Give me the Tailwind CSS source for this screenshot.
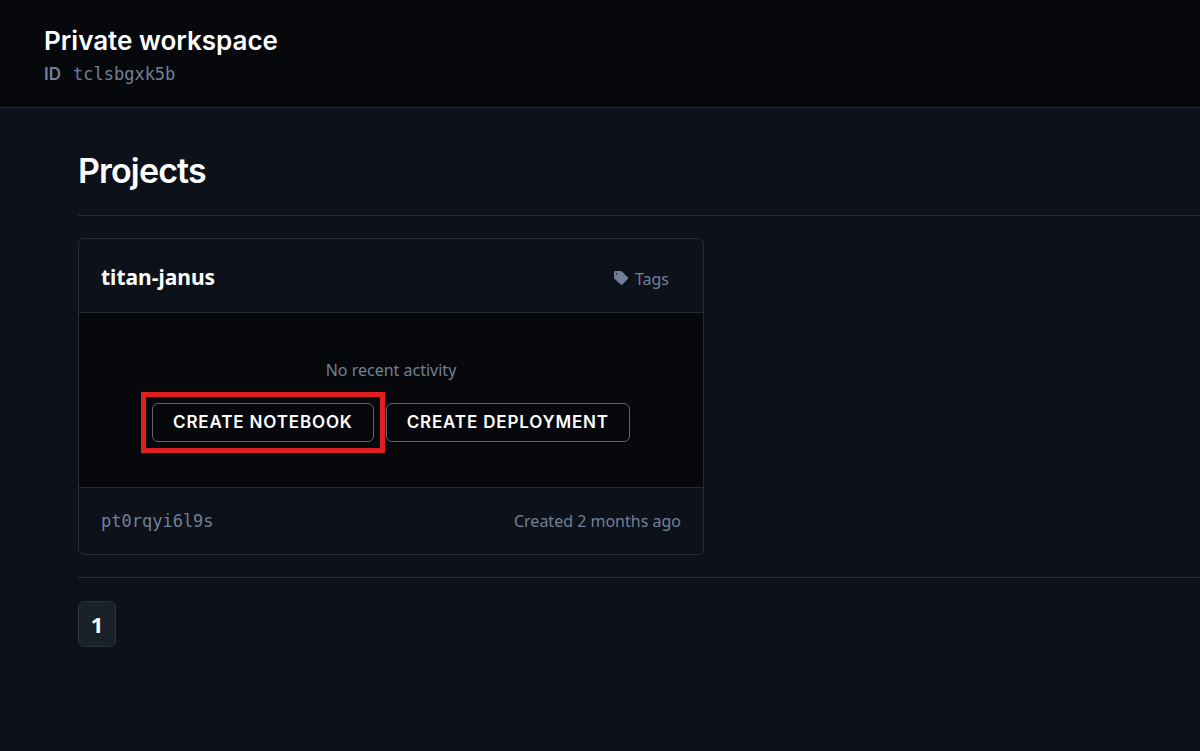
<!DOCTYPE html>
<html lang="en">
<head>
<meta charset="utf-8">
<meta name="viewport" content="width=device-width, initial-scale=1">
<title>Private workspace</title>
<script src="https://cdn.jsdelivr.net/npm/@tailwindcss/browser@4"></script>
</head>
<body class="min-h-screen bg-[#0d1119] font-['Noto_Sans',sans-serif] text-[#718096]">
  <header class="border-b border-[#272b33] bg-[#06080c] px-11 pt-[25px] pb-5">
    <h1 class="font-['Inter',sans-serif] text-[26px] leading-8 font-semibold text-white">Private workspace</h1>
    <p class="mt-1 flex items-center gap-3 text-[17px] leading-[26px]">
      <span class="font-['Inter',sans-serif] font-semibold">ID</span>
      <span class="font-['DejaVu_Sans_Mono',monospace]">tclsbgxk5b</span>
    </p>
  </header>
  <main class="pt-[39px] pl-[78px]">
    <h2 class="border-b border-[#272b33] pb-[21px] font-['Inter',sans-serif] text-[34px] leading-[47px] font-semibold tracking-tight text-white">Projects</h2>
    <article class="mt-[22px] w-[626px] max-w-full rounded-md border border-[#272b33]">
      <div class="flex h-[73px] items-center justify-between pt-[2px] pr-[34px] pl-[22px]">
        <h3 class="text-[21px] leading-8 font-bold text-white">titan-janus</h3>
        <button type="button" class="flex items-center gap-[7px] pt-1 text-[16px] leading-6">
          <svg class="mb-[2px] size-[14px]" viewBox="0 0 14 14" fill="currentColor" aria-hidden="true"><path fill-rule="evenodd" d="M1.500 0h5.200c.5 0 .9.2 1.200.5l5.600 5.600c.7.7.7 1.500 0 2.200l-4.900 5c-.7.7-1.500.7-2.200 0L.5 7.700C.2 7.400 0 7 0 6.500V1.500C0 .6.6 0 1.500 0Zm1.200 1.900a.8.8 0 1 0 0 1.600.8.8 0 0 0 0-1.600Z"/></svg>
          Tags
        </button>
      </div>
      <div class="border-y border-[#272b33] bg-[#06080c] pt-11 pb-[45px] text-center">
        <p class="text-[16px] leading-[27px]">No recent activity</p>
        <div class="mt-[19px] flex justify-center gap-3 font-['Inter',sans-serif] text-[17px] leading-[21px] font-semibold tracking-wider text-white">
          <div class="relative">
            <button type="button" class="rounded-md border border-[#5d6679] px-5 py-2">CREATE NOTEBOOK</button>
            <span class="pointer-events-none absolute -inset-[11px] border-5 border-[#e02020]"></span>
          </div>
          <button type="button" class="rounded-md border border-[#5d6679] px-5 py-2">CREATE DEPLOYMENT</button>
        </div>
      </div>
      <div class="flex h-[66px] items-center justify-between px-[22px] text-[16px] leading-6">
        <span class="font-['DejaVu_Sans_Mono',monospace] text-[17px]">pt0rqyi6l9s</span>
        <span>Created 2 months ago</span>
      </div>
    </article>
    <nav aria-label="Pages" class="mt-[22px] border-t border-[#272b33] pt-[23px]">
      <button type="button" aria-current="page" class="h-[46px] w-[38px] rounded-md border border-[#2b323a] bg-[#19212a] text-[22px] font-bold text-white">1</button>
    </nav>
  </main>
</body>
</html>
